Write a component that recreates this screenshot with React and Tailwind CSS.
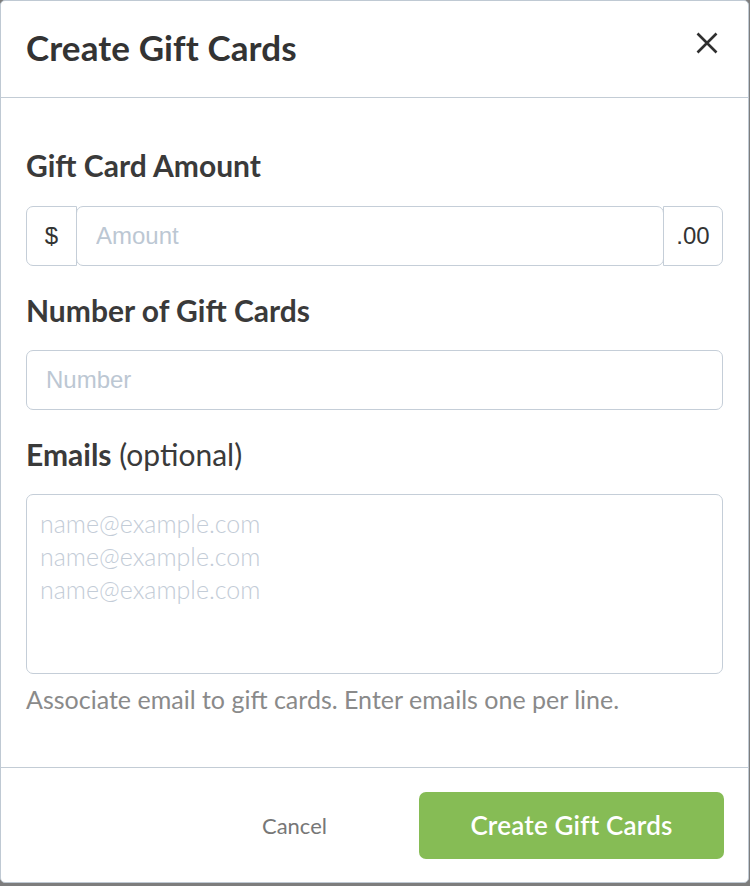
import React from 'react';

const heading = { fontFamily: 'Lato, "Noto Sans", sans-serif' };
const field = { fontFamily: '"Liberation Sans", Arial, sans-serif' };

const CloseIcon = () => (
  <svg width="22" height="22" viewBox="0 0 22 22" fill="none" stroke="#2f2f2f" strokeWidth="2.6" strokeLinecap="butt">
    <path d="M1.5 1.5 L20.5 20.5 M20.5 1.5 L1.5 20.5" />
  </svg>
);

export default function App() {
  return (
    <div className="w-[750px] h-[886px] bg-[#7d7d7d]">
      <div className="w-[749px] h-[883px] bg-white border border-[#bfc9d3] rounded-[5px] flex flex-col" style={heading}>
        {/* header */}
        <div className="h-[97px] shrink-0 flex items-center justify-between pl-[25px] pr-[30px] border-b border-[#c3ccd5]">
          <h1 className="pb-[5px] text-[35px] font-bold text-[#333333] leading-[40px] tracking-[0.1px]">Create Gift Cards</h1>
          <button className="p-0 mb-[12px]">
            <CloseIcon />
          </button>
        </div>

        {/* body */}
        <div className="flex-1 px-[25px] pt-[49px]">
          <label className="block text-[30px] font-bold text-[#3a3a3a] leading-[36px]">Gift Card Amount</label>
          <div className="mt-[23px] flex h-[60px] text-[24px]" style={field}>
            <span className="w-[51px] flex items-center justify-center border border-[#c5ced8] rounded-l-[7px] text-[#333]">$</span>
            <input
              placeholder="Amount"
              className="flex-1 min-w-0 -ml-px border border-[#c5ced8] rounded-[7px] px-[19px] text-[#333] placeholder-[#bcc7d3] outline-none"
            />
            <span className="w-[60px] -ml-px flex items-center justify-center border border-[#c5ced8] rounded-r-[7px] text-[#333]">.00</span>
          </div>

          <label className="block mt-[26px] text-[30px] font-bold text-[#3a3a3a] leading-[36px]">Number of Gift Cards</label>
          <input
            placeholder="Number"
            className="mt-[22px] block w-full h-[60px] border border-[#c5ced8] rounded-[7px] px-[19px] text-[24px] text-[#333] placeholder-[#bcc7d3] outline-none"
            style={field}
          />

          <label className="block mt-[26px] text-[30px] text-[#3a3a3a] leading-[36px]">
            <span className="font-bold">Emails</span> (optional)
          </label>
          <textarea
            placeholder={'name@example.com\nname@example.com\nname@example.com'}
            className="mt-[22px] block w-full h-[180px] resize-none border border-[#c5ced8] rounded-[7px] px-[13px] py-[12px] text-[25px] font-light leading-[33px] text-[#333] placeholder-[#c3ccd7] outline-none"
          />
          <p className="mt-[10px] text-[25px] text-[#8a8a8a] leading-[30px]">
            Associate email to gift cards. Enter emails one per line.
          </p>
        </div>

        {/* footer */}
        <div className="h-[115px] shrink-0 border-t border-[#c3ccd5] flex items-center justify-end pr-[24px] gap-[92px]">
          <button className="text-[22px] text-[#777777]">Cancel</button>
          <button className="w-[305px] h-[67px] rounded-[7px] bg-[#86bc55] text-white text-[26px] font-semibold tracking-[0.2px]">
            Create Gift Cards
          </button>
        </div>
      </div>
    </div>
  );
}
